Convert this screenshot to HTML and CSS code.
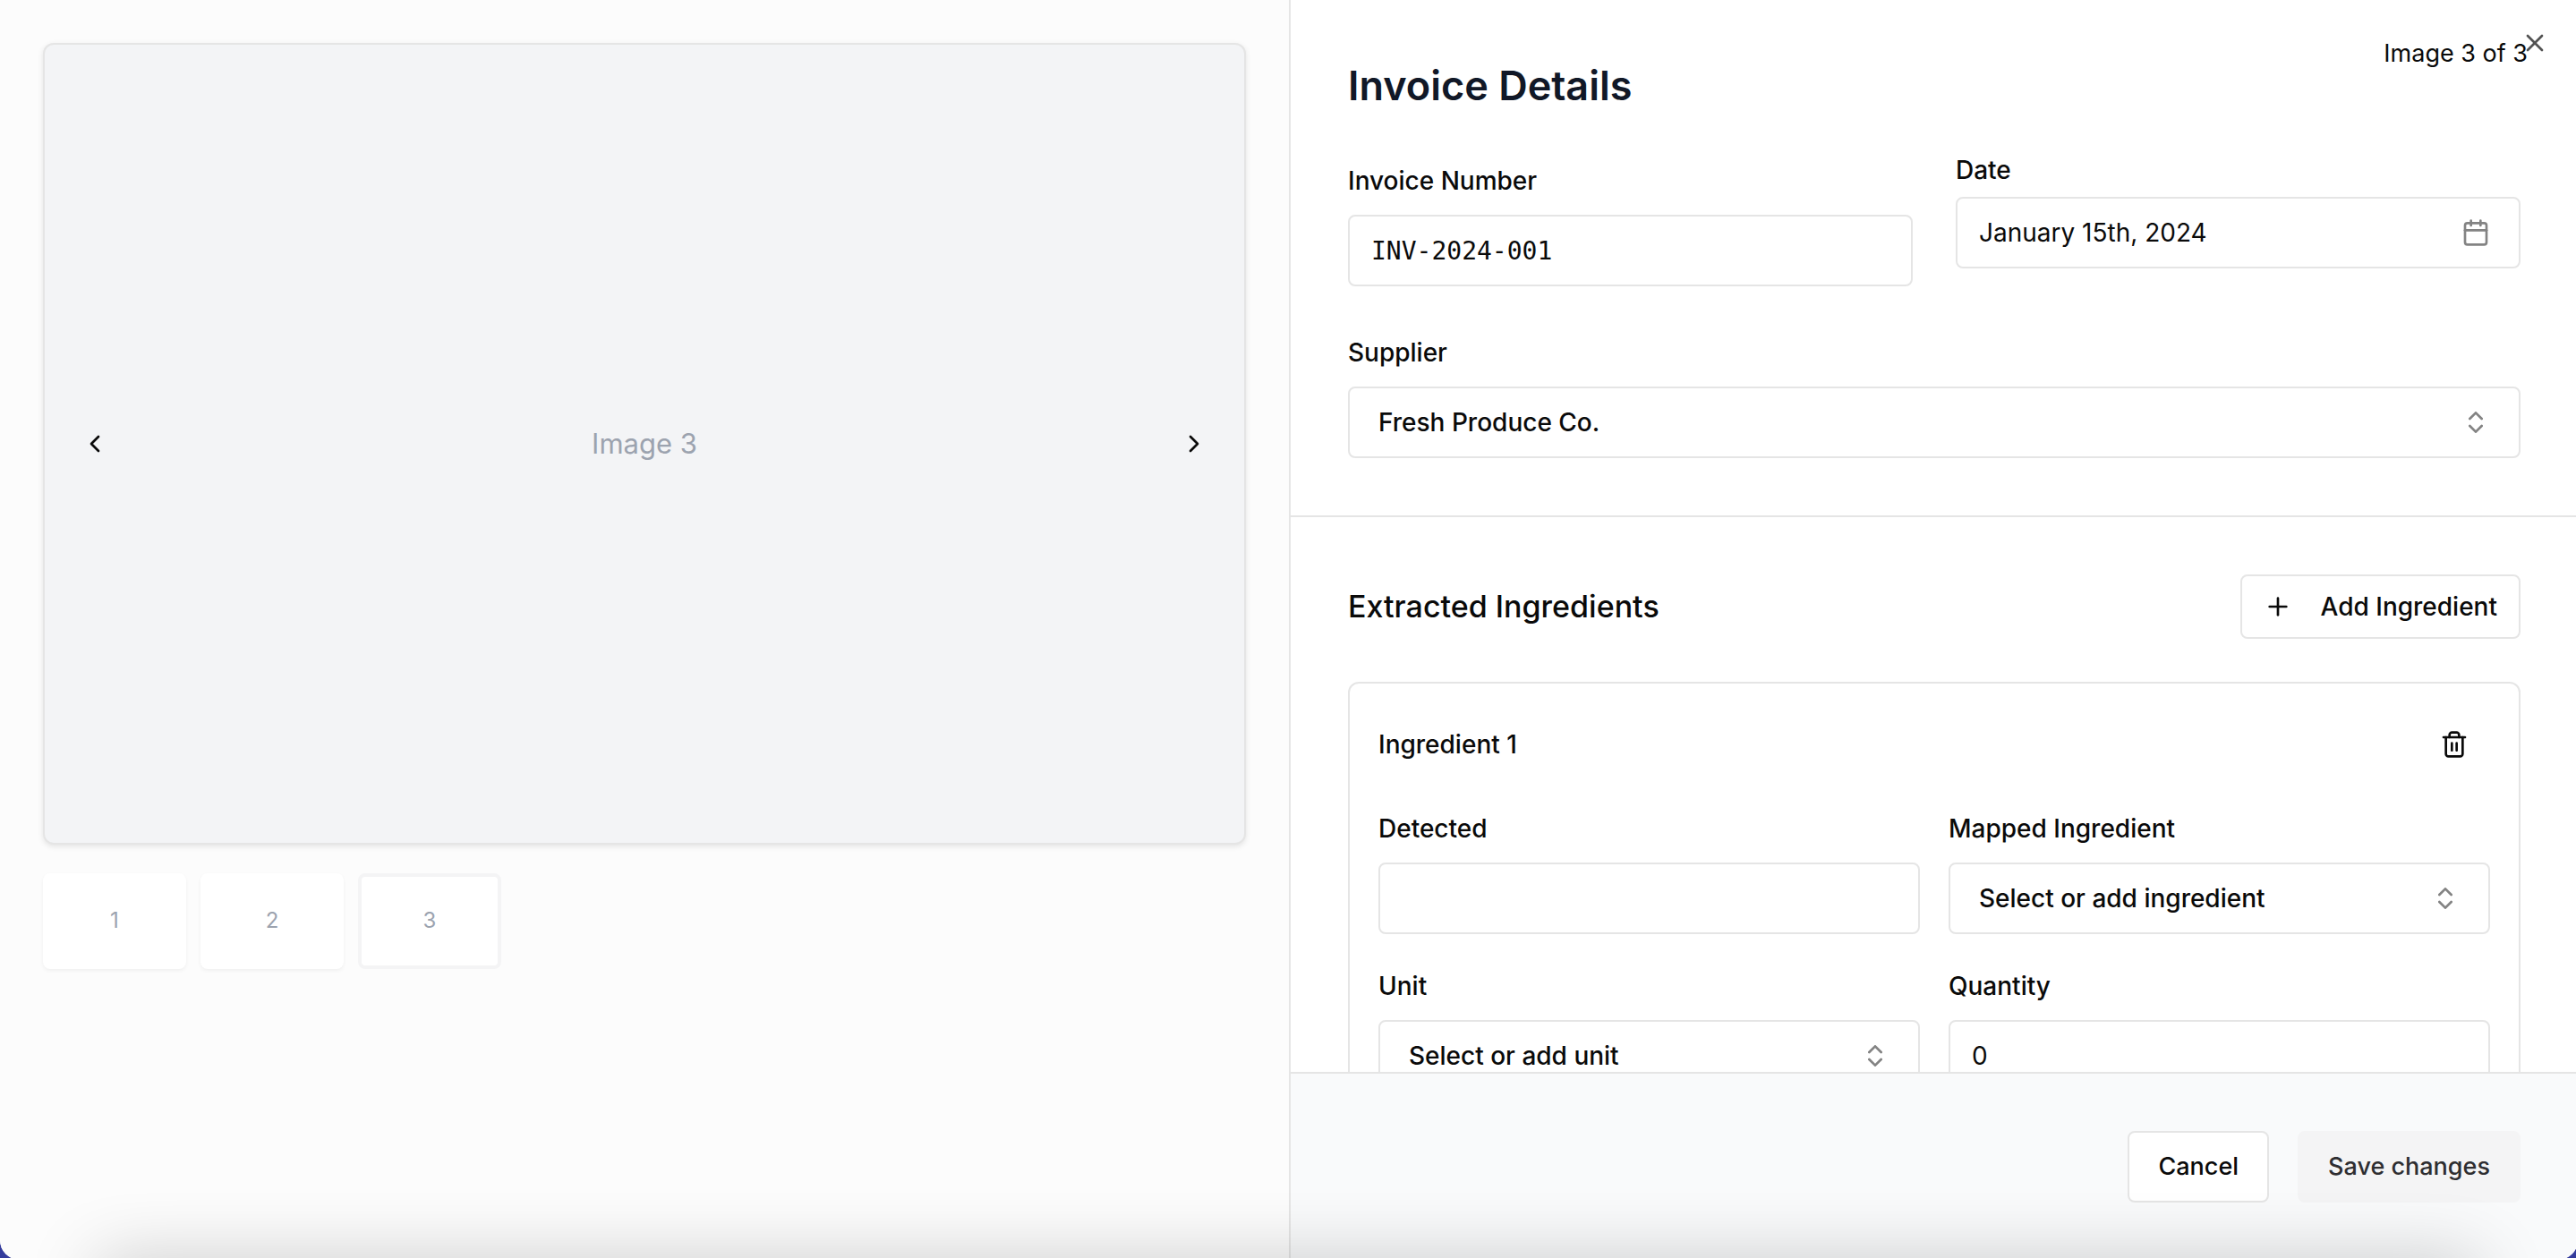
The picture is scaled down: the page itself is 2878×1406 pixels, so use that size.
FILE: index.html
```html
<!DOCTYPE html>
<html lang="en">
<head>
<meta charset="utf-8">
<meta name="viewport" content="width=device-width, initial-scale=1">
<title>Invoice Details</title>
<link rel="stylesheet" href="styles.css">
</head>
<body>
<svg class="sprite" aria-hidden="true">
  <symbol id="chevron-left" viewBox="0 0 24 24"><path d="m15 18-6-6 6-6"/></symbol>
  <symbol id="chevron-right" viewBox="0 0 24 24"><path d="m9 18 6-6-6-6"/></symbol>
  <symbol id="chevrons" viewBox="0 0 24 24"><path d="m7 15 5 5 5-5"/><path d="m7 9 5-5 5 5"/></symbol>
  <symbol id="calendar" viewBox="0 0 24 24"><path d="M8 2v4"/><path d="M16 2v4"/><rect width="18" height="18" x="3" y="4" rx="2"/><path d="M3 10h18"/></symbol>
  <symbol id="plus" viewBox="0 0 24 24"><path d="M5 12h14"/><path d="M12 5v14"/></symbol>
  <symbol id="close" viewBox="0 0 24 24"><path d="M18 6 6 18"/><path d="m6 6 12 12"/></symbol>
  <symbol id="trash" viewBox="0 0 24 24"><path d="M3 6h18"/><path d="M19 6v14c0 1-1 2-2 2H7c-1 0-2-1-2-2V6"/><path d="M8 6V4c0-1 1-2 2-2h4c1 0 2 1 2 2v2"/><path d="M10 11v6"/><path d="M14 11v6"/></symbol>
</svg>

<div class="dialog" role="dialog" aria-labelledby="title">
  <section class="gallery" aria-label="Invoice images">
    <div class="preview">
      <button class="nav" type="button" aria-label="Previous image"><svg class="icon"><use href="#chevron-left"/></svg></button>
      <span class="preview-name">Image 3</span>
      <button class="nav" type="button" aria-label="Next image"><svg class="icon"><use href="#chevron-right"/></svg></button>
    </div>
    <div class="thumbs">
      <button class="thumb" type="button">1</button>
      <button class="thumb" type="button">2</button>
      <button class="thumb thumb-active" type="button" aria-current="true">3</button>
    </div>
  </section>

  <form class="panel">
    <div class="scroll">
      <section class="section details">
        <h1 class="title" id="title">Invoice Details</h1>
        <div class="grid grid-wide">
          <div class="field">
            <label class="label" for="number">Invoice Number</label>
            <input class="control mono" id="number" type="text" value="INV-2024-001">
          </div>
          <div class="field field-date">
            <label class="label" for="date">Date</label>
            <button class="control date" id="date" type="button">January 15th, 2024 <svg class="icon muted"><use href="#calendar"/></svg></button>
          </div>
        </div>
        <div class="field">
          <label class="label" for="supplier">Supplier</label>
          <div class="select">
            <select class="control" id="supplier"><option>Fresh Produce Co.</option></select>
            <svg class="icon muted"><use href="#chevrons"/></svg>
          </div>
        </div>
      </section>

      <section class="section ingredients">
        <div class="row">
          <h2 class="subtitle">Extracted Ingredients</h2>
          <button class="button add" type="button"><svg class="icon"><use href="#plus"/></svg>Add Ingredient</button>
        </div>
        <div class="card">
          <div class="row">
            <h3 class="card-title">Ingredient 1</h3>
            <button class="remove" type="button" aria-label="Remove ingredient"><svg class="icon"><use href="#trash"/></svg></button>
          </div>
          <div class="grid">
            <div class="field">
              <label class="label" for="detected">Detected</label>
              <input class="control" id="detected" type="text">
            </div>
            <div class="field">
              <label class="label" for="mapped">Mapped Ingredient</label>
              <div class="select">
                <select class="control" id="mapped"><option>Select or add ingredient</option></select>
                <svg class="icon muted"><use href="#chevrons"/></svg>
              </div>
            </div>
            <div class="field">
              <label class="label" for="unit">Unit</label>
              <div class="select">
                <select class="control" id="unit"><option>Select or add unit</option></select>
                <svg class="icon muted"><use href="#chevrons"/></svg>
              </div>
            </div>
            <div class="field">
              <label class="label" for="quantity">Quantity</label>
              <input class="control" id="quantity" type="number" value="0">
            </div>
          </div>
        </div>
      </section>
    </div>

    <footer class="footer">
      <button class="button" type="button">Cancel</button>
      <button class="button save" type="submit">Save changes</button>
    </footer>
  </form>

  <p class="counter">Image 3 of 3</p>
  <button class="close" type="button" aria-label="Close"><svg class="icon"><use href="#close"/></svg></button>
</div>
<div class="dock-shadow"></div>
</body>
</html>
```
FILE: styles.css
```css
* { box-sizing: border-box; }

body {
  margin: 0;
  height: 100vh;
  overflow: hidden;
  background: #343c9c;
  color: #0a0a0a;
  font-family: Inter, "Liberation Sans", sans-serif;
  font-size: 28px;
  line-height: 40px;
}

h1, h2, h3, p { margin: 0; }

button, input, select {
  font: inherit;
  color: inherit;
  margin: 0;
}

button {
  border: 0;
  padding: 0;
  background: none;
  cursor: pointer;
}

.sprite { position: absolute; width: 0; height: 0; }

.icon {
  flex: none;
  display: block;
  width: 32px;
  height: 32px;
  fill: none;
  stroke: currentColor;
  stroke-width: 2;
  stroke-linecap: round;
  stroke-linejoin: round;
}

.muted { opacity: 0.5; }

/* The dialog runs just past the window on the right and bottom edges */
.dialog {
  position: relative;
  display: grid;
  grid-template-columns: 1fr 1fr;
  width: calc(100% + 2px);
  height: calc(100vh + 2px);
  overflow: hidden;
  border-radius: 0 0 22px 22px;
  background: #fff;
}

/* Image side */
.gallery {
  display: flex;
  flex-direction: column;
  gap: 32px;
  padding: 48px;
  background: #fcfcfc;
}

.preview {
  display: flex;
  align-items: center;
  justify-content: space-between;
  aspect-ratio: 3 / 2;
  padding: 0 24px;
  border: 2px solid #e5e5e5;
  border-radius: 12px;
  background: #f3f4f6;
  box-shadow: 0 2px 6px rgba(0, 0, 0, 0.1);
}

.preview-name { color: #9ca3af; font-size: 31px; }

.nav {
  display: grid;
  place-items: center;
  width: 64px;
  height: 64px;
}

.thumbs { display: flex; gap: 16px; }

.thumb {
  width: 160px;
  aspect-ratio: 3 / 2;
  border-radius: 8px;
  background: #fff;
  box-shadow: 0 2px 4px rgba(0, 0, 0, 0.05);
  color: #9ca3af;
  font-size: 24px;
}

.thumb-active {
  border: 4px solid #f4f4f5;
  box-shadow: none;
}

/* Form side */
.panel {
  display: flex;
  flex-direction: column;
  min-width: 0;
  min-height: 0;
  border-left: 2px solid #e5e5e5;
}

.scroll {
  flex: 1;
  min-height: 0;
  overflow: hidden;
}

.section {
  display: flex;
  flex-direction: column;
  gap: 48px;
  padding: 64px;
}

.details { border-bottom: 2px solid #e5e5e5; }

.title {
  color: #111827;
  font-size: 45px;
  font-weight: 600;
  line-height: 64px;
}

.subtitle { font-size: 34px; font-weight: 500; }

.grid {
  display: grid;
  grid-template-columns: 1fr 1fr;
  gap: 32px;
}

.grid-wide { column-gap: 48px; }

.field {
  display: flex;
  flex-direction: column;
  gap: 12px;
}

.label { font-weight: 500; line-height: 52px; }

.field-date { gap: 16px; }
.field-date .label { line-height: 28px; }

.control {
  width: 100%;
  height: 80px;
  padding: 0 24px;
  border: 2px solid #e5e5e5;
  border-radius: 8px;
  background: #fff;
  outline: 0;
}

.mono { font-family: "DejaVu Sans Mono", monospace; }

.date {
  display: flex;
  align-items: center;
  justify-content: space-between;
  padding-right: 32px;
}

.select { display: grid; align-items: center; }

.select > * { grid-area: 1 / 1; }

.select .control {
  appearance: none;
  padding: 0 32px;
  font-weight: 500;
}

.select .icon {
  justify-self: end;
  margin-right: 34px;
  pointer-events: none;
}

.row {
  display: flex;
  align-items: center;
  justify-content: space-between;
}

.button {
  height: 80px;
  padding: 0 32px;
  border: 2px solid #e5e5e5;
  border-radius: 8px;
  background: #fff;
  font-size: 27px;
  font-weight: 500;
}

.add {
  display: flex;
  align-items: center;
  gap: 32px;
  height: 72px;
  padding: 0 24px;
  font-size: 28px;
}

.card {
  display: flex;
  flex-direction: column;
  gap: 32px;
  padding: 32px;
  border: 2px solid #e5e5e5;
  border-radius: 12px;
}

.card-title { font-size: 28px; font-weight: 500; }

.remove {
  display: grid;
  place-items: center;
  width: 80px;
  height: 72px;
}

.footer {
  display: flex;
  justify-content: flex-end;
  gap: 32px;
  padding: 64px;
  border-top: 2px solid #e5e5e5;
  background: #f9fafb;
}

.save {
  border-color: #f4f4f5;
  background: #f4f4f5;
  color: #2e2e31;
}

/* Overlays in the dialog's top corner */
.counter {
  position: absolute;
  top: 40px;
  right: 56px;
  font-size: 27px;
}

.close {
  position: absolute;
  top: 32px;
  right: 32px;
  opacity: 0.7;
}

/* Soft shade along the bottom edge of the window */
.dock-shadow {
  position: fixed;
  right: 110px;
  bottom: -50px;
  left: 110px;
  height: 40px;
  box-shadow: 0 0 80px 0 rgba(0, 0, 0, 0.3);
  pointer-events: none;
}
```
